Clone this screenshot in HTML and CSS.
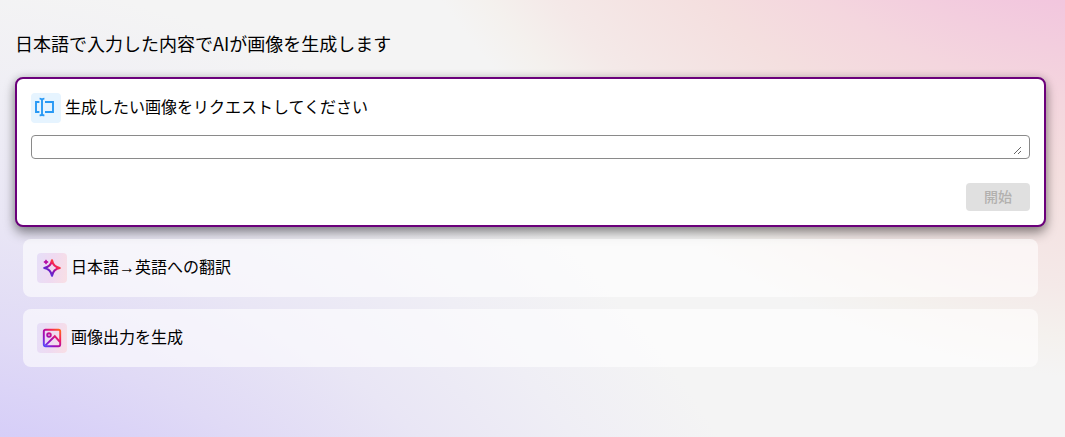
FILE: index.html
```html
<!DOCTYPE html>
<html lang="ja">
<head>
<meta charset="utf-8">
<meta name="viewport" content="width=device-width, initial-scale=1">
<title>AI 画像生成</title>
<link rel="stylesheet" href="styles.css">
</head>
<body>
<main class="page">
  <h1 class="title">日本語で入力した内容でAIが画像を生成します</h1>
  <form class="card card-active">
    <div class="card-head">
      <span class="icon icon-input">
        <svg width="20" height="20" viewBox="0 0 20 20" fill="none" stroke="#2899f5" stroke-width="1.9" aria-hidden="true">
          <path d="M4.4 5H1V15H4.4M10 5H18V15H10"/>
          <path d="M4.6 1.6C6 1.6 7 1.8 7 3.2V16.8C7 18.2 6 18.4 4.6 18.4M9.4 1.6C8 1.6 7 1.8 7 3.2M9.4 18.4C8 18.4 7 18.2 7 16.8"/>
        </svg>
      </span>
      <label class="label" for="request">生成したい画像をリクエストしてください</label>
    </div>
    <div class="field"><textarea class="field-text" id="request" rows="1"></textarea></div>
    <div class="actions"><button class="start" type="button" disabled>開始</button></div>
  </form>
  <div class="steps">
    <section class="card card-step">
      <div class="card-head">
        <span class="icon icon-ai">
          <svg width="20" height="20" viewBox="0 0 20 20" fill="none" aria-hidden="true">
            <defs><linearGradient id="spark" x1="4" y1="17" x2="16" y2="4" gradientUnits="userSpaceOnUse"><stop offset="0" stop-color="#5b3df0"/><stop offset=".3" stop-color="#6b1fc4"/><stop offset=".52" stop-color="#a00fa8"/><stop offset=".72" stop-color="#f2205b"/><stop offset="1" stop-color="#ff5a1f"/></linearGradient></defs>
            <path d="M10 2.2C10.9 7 13 9.1 17.8 10C13 10.9 10.9 13 10 17.8C9.1 13 7 10.9 2.2 10C7 9.1 9.1 7 10 2.2Z" stroke="url(#spark)" stroke-width="2.1" stroke-linejoin="round"/>
            <path d="M4 2.2L4.6 3.4L5.8 4L4.6 4.6L4 5.8L3.4 4.6L2.2 4L3.4 3.4Z" fill="#b50fa5" stroke="#b50fa5" stroke-width="1.2" stroke-linejoin="round"/>
          </svg>
        </span>
        <h2 class="label">日本語→英語への翻訳</h2>
      </div>
    </section>
    <section class="card card-step">
      <div class="card-head">
        <span class="icon icon-ai">
          <svg width="20" height="20" viewBox="0 0 20 20" fill="none" stroke="url(#photo)" stroke-width="1.9" aria-hidden="true">
            <defs><linearGradient id="photo" x1="2" y1="18" x2="18" y2="2" gradientUnits="userSpaceOnUse"><stop offset="0" stop-color="#5546ff"/><stop offset=".3" stop-color="#9a0fbd"/><stop offset=".5" stop-color="#b50da0"/><stop offset=".72" stop-color="#f5205b"/><stop offset="1" stop-color="#ff641e"/></linearGradient></defs>
            <rect x="1.8" y="1.8" width="16.4" height="16.4" rx="1.6"/>
            <circle cx="7" cy="7" r="1.8"/>
            <path d="M3.4 17.4L12.8 8.2L18 14"/>
          </svg>
        </span>
        <h2 class="label">画像出力を生成</h2>
      </div>
    </section>
  </div>
</main>
</body>
</html>
```
FILE: styles.css
```css
* { box-sizing: border-box; }

body {
  margin: 0;
  min-height: 100vh;
  color: #000;
  font-family: "Noto Sans CJK JP", sans-serif;
  background:
    radial-gradient(circle at calc(100% + 108px) -506px, #f2c6de 517px, #f4d6de 615px, #f4dfdf 690px, #f4e9e8 800px, rgba(244, 240, 236, .8) 850px, rgba(244, 244, 244, 0) 890px),
    radial-gradient(circle at -108px calc(100% + 506px), #d6cef8 517px, #e0daf6 613px, #e9e6f5 730px, #efeef5 850px, #f4f4f4 970px);
}

.page {
  padding: 31px 19px 32px 15px;
}

.title {
  margin: 0 0 22px;
  font-size: 18px;
  line-height: 24px;
  font-weight: 400;
}

.card {
  padding: 14px;
  border-radius: 8px;
}

.card-active {
  border: 2px solid #6b007b;
  background: #fff;
  box-shadow: 0 6px 12px rgba(0, 0, 0, .4), 0 0 8px rgba(0, 0, 0, .16);
}

.card-head {
  display: flex;
  align-items: center;
  gap: 4px;
}

.icon {
  display: grid;
  place-items: center;
  flex: none;
  width: 30px;
  height: 30px;
  border-radius: 4px;
}

.icon-input {
  padding: 0 2px 2px 0;
  background: #e6f4ff;
}

.icon-ai {
  background: linear-gradient(100deg, #e6dff8, #efdaf1 50%, #f9dfe4);
}

.label {
  margin: 0;
  font-family: "Liberation Sans", "Noto Sans CJK JP", sans-serif;
  font-size: 16px;
  line-height: 24px;
  font-weight: 400;
}

.field {
  display: flex;
  height: 24px;
  margin-top: 12px;
  padding: 3px 7px;
  border: 1px solid #8a8a8a;
  border-radius: 4px;
}

.field-text {
  flex: 1;
  min-width: 0;
  padding: 0;
  border: 0;
  outline: 0;
  overflow: hidden;
  resize: vertical;
  background: transparent;
  font: inherit;
  font-size: 14px;
  line-height: 16px;
}

.actions {
  display: flex;
  justify-content: flex-end;
  margin-top: 24px;
}

.start {
  height: 28px;
  padding: 0 18px 2px;
  border: 0;
  border-radius: 4px;
  background: #e0e0e0;
  color: #b2b0ae;
  font: inherit;
  font-size: 14px;
  font-weight: 500;
  line-height: 20px;
}

.steps {
  display: grid;
  gap: 12px;
  margin-top: 12px;
  padding: 0 8px;
}

.card-step {
  background: rgba(255, 255, 255, .6);
}
```
